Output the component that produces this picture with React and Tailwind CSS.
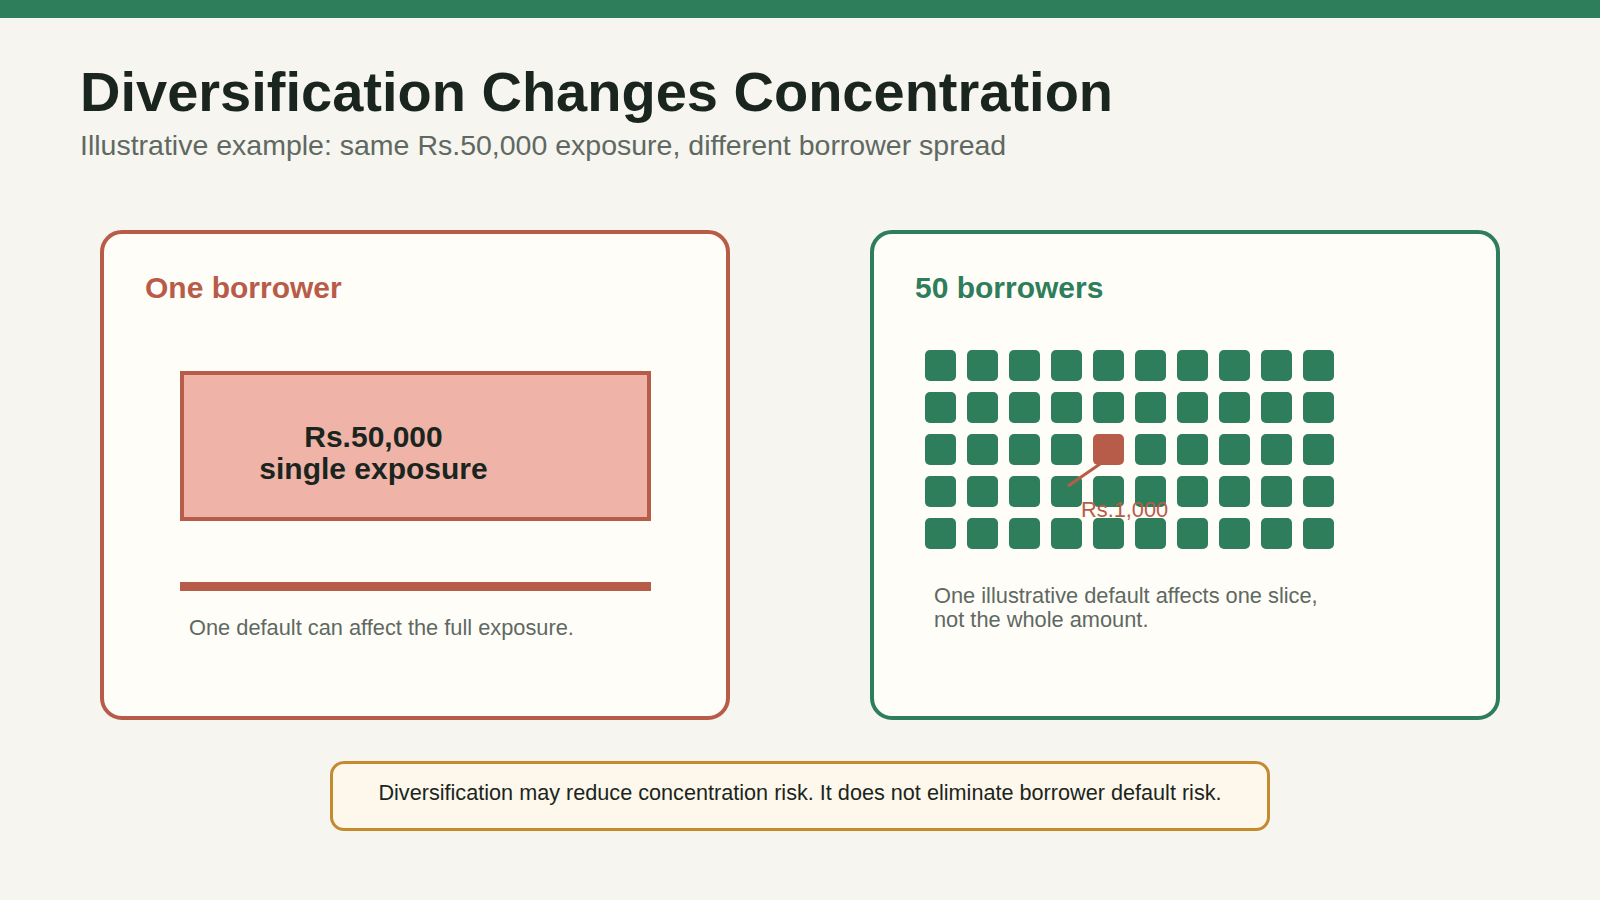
import React from 'react'

const font = "font-['Liberation_Sans',Arial,sans-serif]"

function Slices() {
  const cells = Array.from({ length: 50 }, (_, i) => i)
  return (
    <div className="relative ml-[10px] mt-[47px] w-max">
      <div className="grid grid-cols-10 gap-[11px]">
        {cells.map(i => (
          <div
            key={i}
            className={`w-[31px] h-[31px] rounded-[5px] ${i === 24 ? 'bg-[#b85c4a]' : 'bg-[#2e7d5b]'}`}
          />
        ))}
      </div>

      {/* callout for the defaulted slice */}
      <svg className="absolute left-0 top-0 overflow-visible" width="1" height="1">
        <line x1="175" y1="114" x2="143" y2="136" stroke="#b85c4a" strokeWidth="3" />
      </svg>
      <span className="absolute left-[156px] top-[149px] text-[21.8px] leading-none text-[#b85c4a] whitespace-nowrap">
        Rs.1,000
      </span>
    </div>
  )
}

export default function App() {
  return (
    <div className={`w-[1600px] h-[900px] bg-[#f6f5f0] ${font} overflow-hidden`}>
      <div className="h-[18px] bg-[#2e7d5b]" />

      {/* Heading */}
      <div className="px-[80px]">
        <h1 className="mt-[46px] text-[56px] leading-none font-bold text-[#1a2520] whitespace-nowrap">
          Diversification Changes Concentration
        </h1>
        <p className="mt-[11px] text-[28.5px] leading-none text-[#5f6962] whitespace-nowrap">
          Illustrative example: same Rs.50,000 exposure, different borrower spread
        </p>
      </div>

      {/* Comparison cards */}
      <div className="mt-[70px] px-[100px] flex gap-[140px]">
        <div className="w-[630px] h-[490px] border-4 border-[#b85c4a] rounded-[22px] bg-[#fefdf8] pl-[41px] pt-[39px]">
          <h2 className="text-[30px] leading-none font-bold text-[#b85c4a]">One borrower</h2>
          <div className="ml-[35px] mt-[68px] w-[471px] h-[150px] border-4 border-[#b85c4a] bg-[#f0b3a8] pt-[46px]">
            <div className="w-[379px] text-center text-[30px] leading-[32px] font-bold text-[#1a2520]">
              Rs.50,000
              <br />
              single exposure
            </div>
          </div>
          <div className="ml-[35px] mt-[61px] w-[471px] h-[9px] bg-[#b85c4a]" />
          <p className="ml-[44px] mt-[26px] text-[21.8px] leading-none text-[#5f6962]">
            One default can affect the full exposure.
          </p>
        </div>

        <div className="w-[630px] h-[490px] border-4 border-[#2e7d5b] rounded-[22px] bg-[#fefdf8] pl-[41px] pt-[39px]">
          <h2 className="text-[30px] leading-none font-bold text-[#2e7d5b]">50 borrowers</h2>
          <Slices />
          <p className="ml-[19px] mt-[35px] text-[21.8px] leading-[24px] text-[#5f6962]">
            One illustrative default affects one slice,
            <br />
            not the whole amount.
          </p>
        </div>
      </div>

      {/* Disclaimer */}
      <div className="mt-[41px] flex justify-center">
        <div className="w-[940px] h-[70px] border-[3px] border-[#c48a2e] rounded-[14px] bg-[#fef8ec] pt-[18px] text-center text-[21.65px] leading-none text-[#1a2520]">
          Diversification may reduce concentration risk. It does not eliminate borrower default risk.
        </div>
      </div>
    </div>
  )
}
